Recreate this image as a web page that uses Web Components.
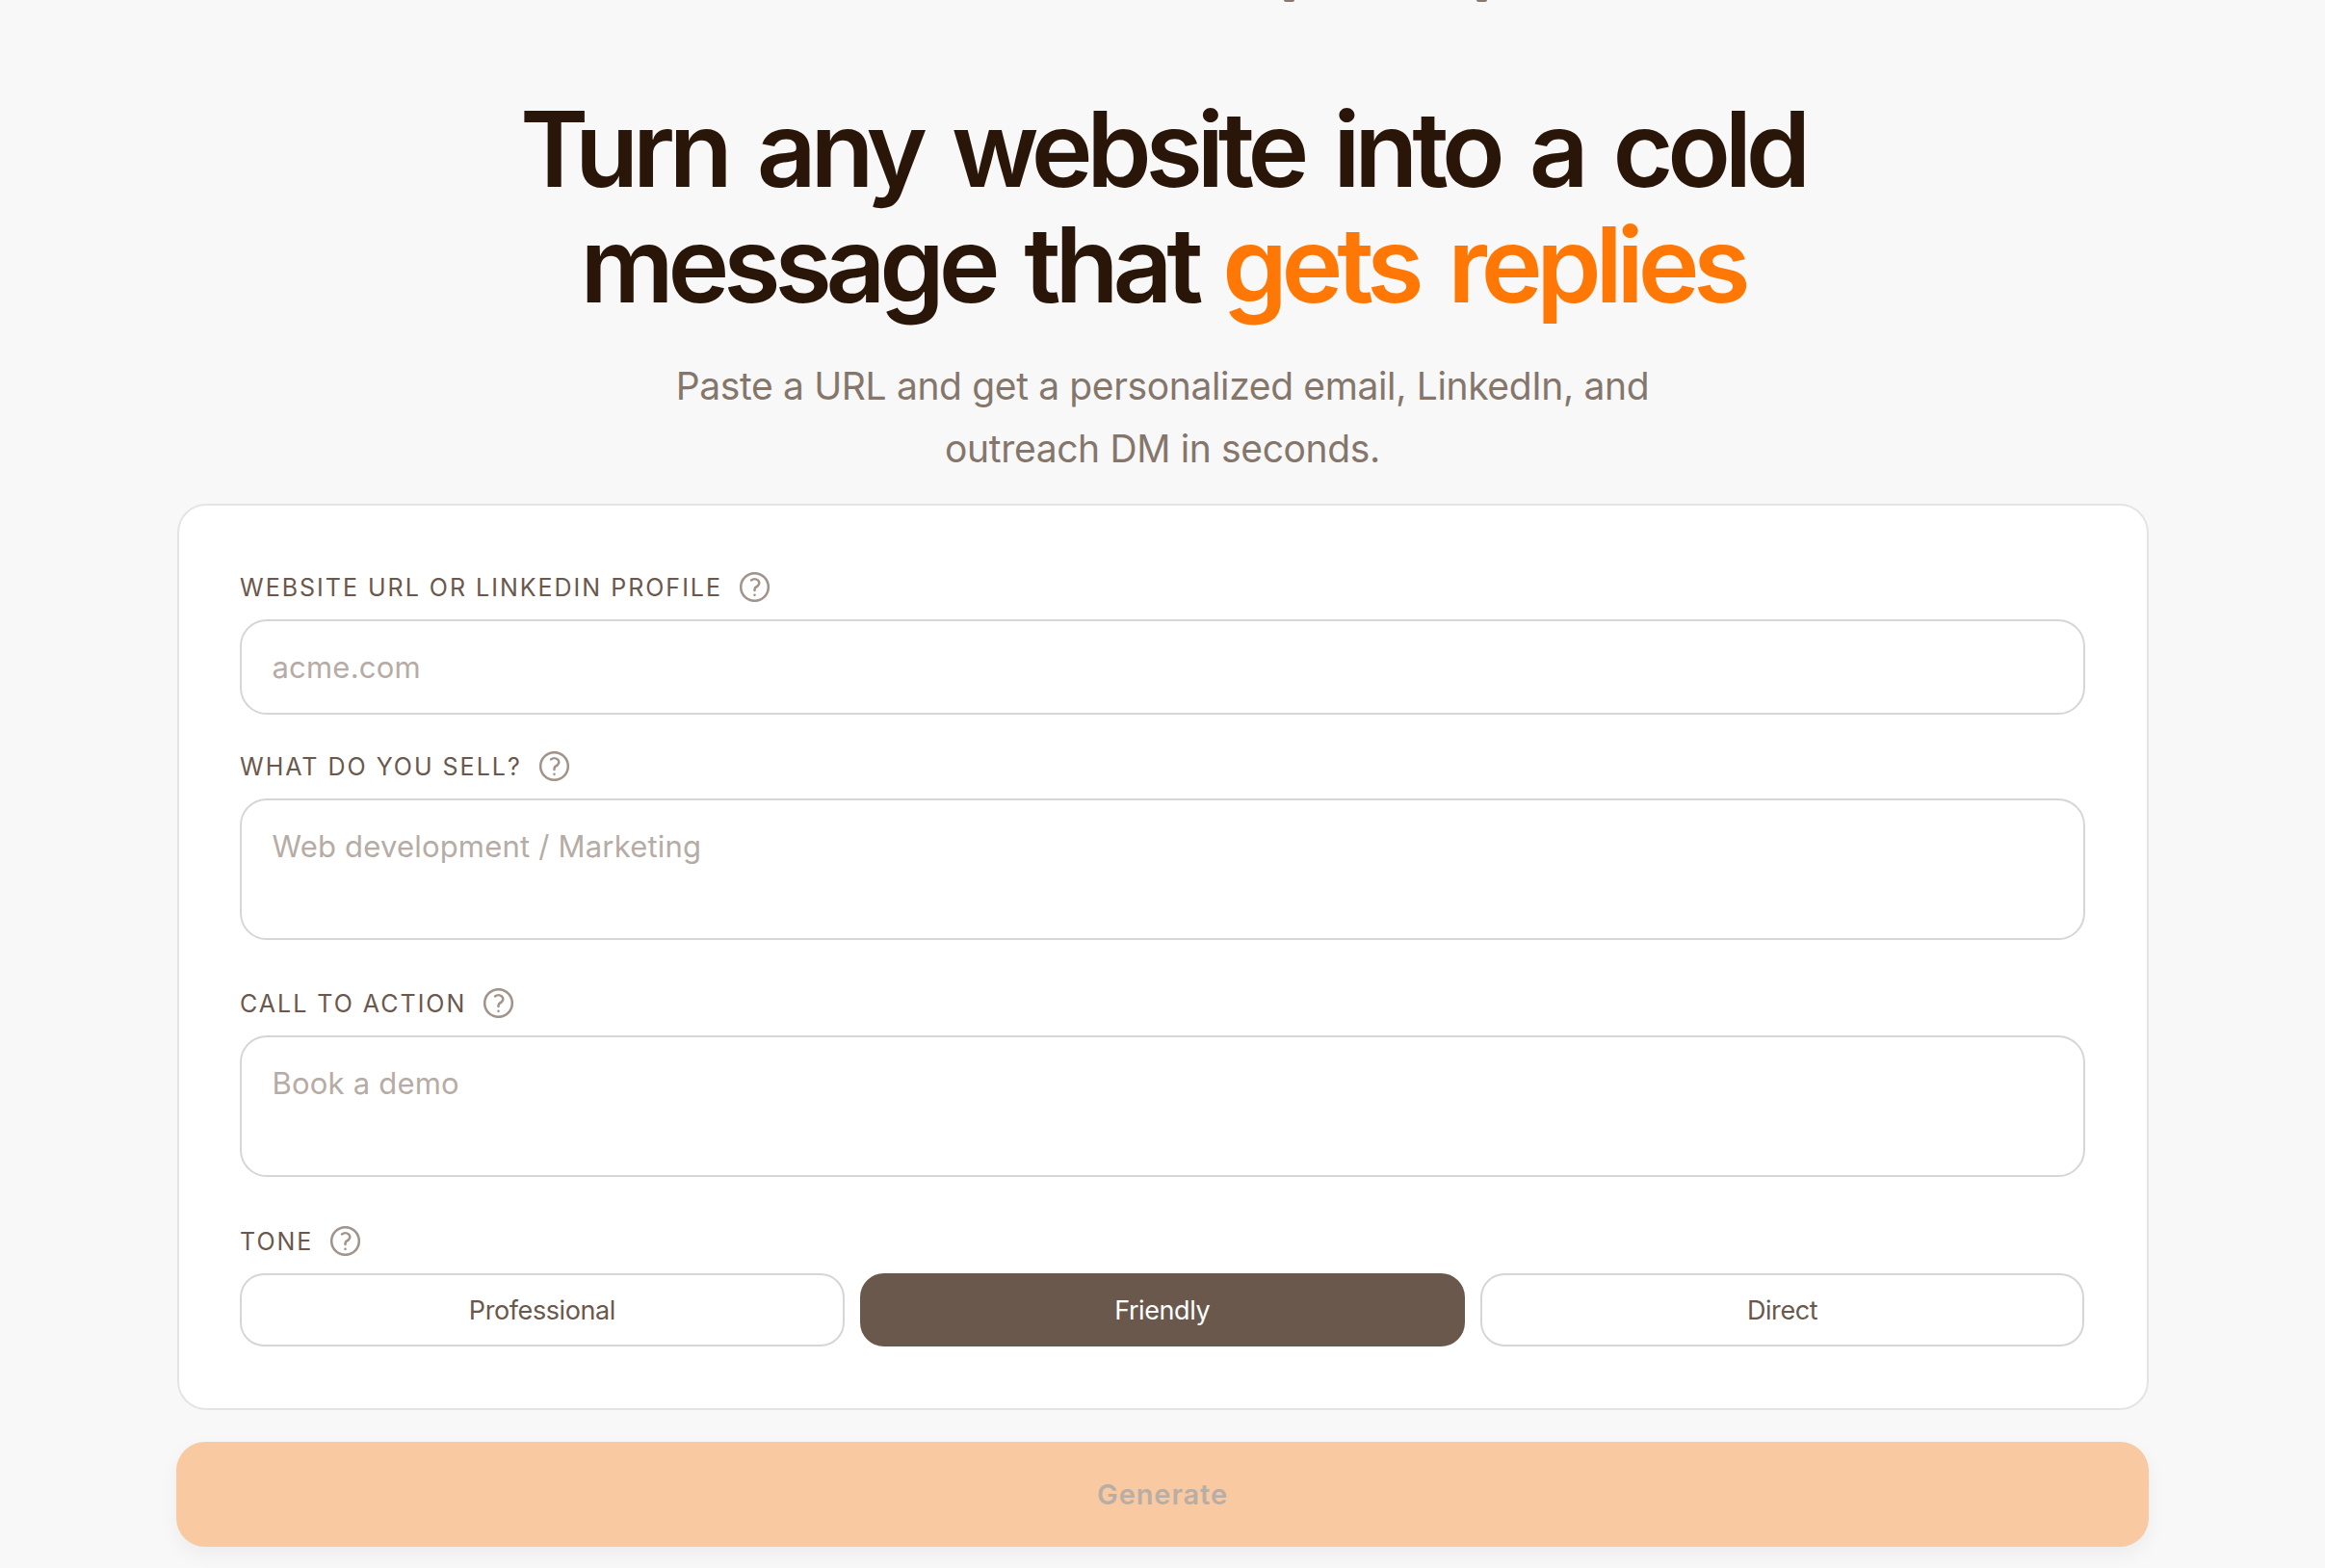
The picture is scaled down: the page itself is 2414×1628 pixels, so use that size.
<!DOCTYPE html>
<html lang="en">
<head>
<meta charset="utf-8">
<title>Cold message generator</title>
<style>
  html, body { margin: 0; height: 100%; overflow: hidden; }
  body { background: #f8f8f8; font-family: Inter, "Liberation Sans", sans-serif; }
</style>
</head>
<body>
<top-strip></top-strip>
<page-hero></page-hero>
<form-card>
  <form-field label="Website URL or LinkedIn profile" gap="38">
    <text-box placeholder="acme.com" height="99"></text-box>
  </form-field>
  <form-field label="What do you sell?" gap="50">
    <text-box placeholder="Web development / Marketing" height="147"></text-box>
  </form-field>
  <form-field label="Call to action" gap="51">
    <text-box placeholder="Book a demo" height="147"></text-box>
  </form-field>
  <form-field label="Tone" gap="0">
    <tone-picker>
      <tone-option>Professional</tone-option>
      <tone-option selected>Friendly</tone-option>
      <tone-option>Direct</tone-option>
    </tone-picker>
  </form-field>
</form-card>
<generate-button>Generate</generate-button>

<script>
// the nav above is scrolled out of the shot, only two descenders are left
class TopStrip extends HTMLElement {
  connectedCallback() {
    this.attachShadow({ mode: 'open' });
    this.shadowRoot.innerHTML = `
      <style>
        :host { display: flex; height: 2px; padding-left: 1333px; gap: 189px; overflow: hidden; }
        i { width: 11px; height: 2px; background: #6b584c; border-radius: 0 0 6px 6px; opacity: .8; }
      </style>
      <i></i><i></i>`;
  }
}
customElements.define('top-strip', TopStrip);

class PageHero extends HTMLElement {
  connectedCallback() {
    this.attachShadow({ mode: 'open' });
    this.shadowRoot.innerHTML = `
      <style>
        :host { display: block; text-align: center; padding-top: 92.5px; }
        h1 {
          margin: 0; font-size: 108px; line-height: 120px; font-weight: 600;
          letter-spacing: -6.2px; word-spacing: 10px; color: #2a1609;
        }
        em { font-style: normal; color: #ff7806; margin-left: -5px; }
        p {
          margin: 33.5px 0 25px; font-size: 39px; line-height: 65px;
          letter-spacing: -0.36px; color: #85766c;
        }
      </style>
      <h1>Turn any website into a cold<br>message that <em>gets replies</em></h1>
      <p>Paste a URL and get a personalized email, LinkedIn, and<br>outreach DM in seconds.</p>`;
  }
}
customElements.define('page-hero', PageHero);

class FormCard extends HTMLElement {
  connectedCallback() {
    this.attachShadow({ mode: 'open' });
    this.shadowRoot.innerHTML = `
      <style>
        :host {
          display: block; box-sizing: border-box; width: 2047px; margin-left: 183.5px;
          padding: 69px 64px 64px 63.5px; background: #fff;
          border: 2px solid #e4e4e4; border-radius: 30px;
        }
      </style>
      <slot></slot>`;
  }
}
customElements.define('form-card', FormCard);

class FormField extends HTMLElement {
  connectedCallback() {
    const label = this.getAttribute('label') || '';
    this.attachShadow({ mode: 'open' });
    this.shadowRoot.innerHTML = `
      <style>
        :host { display: block; margin-bottom: ${this.getAttribute('gap') || 0}px; }
        .label {
          display: flex; align-items: center; gap: 18px; height: 31px; margin-bottom: 18px;
          font-size: 25px; letter-spacing: 2px; text-transform: uppercase; color: #6b584c;
        }
        svg { width: 31px; height: 31px; fill: none; stroke: #a0948c; stroke-width: 1.6; stroke-linecap: round; stroke-linejoin: round; }
      </style>
      <div class="label">
        <span>${label}</span>
        <svg viewBox="2.25 2.25 19.5 19.5"><path d="M9.879 7.519c1.171-1.025 3.071-1.025 4.242 0 1.172 1.025 1.172 2.687 0 3.712-.203.179-.43.326-.67.442-.745.361-1.45.999-1.45 1.827v.75M21 12a9 9 0 1 1-18 0 9 9 0 0 1 18 0Zm-9 5.25h.008v.008H12v-.008Z"/></svg>
      </div>
      <slot></slot>`;
  }
}
customElements.define('form-field', FormField);

class TextBox extends HTMLElement {
  connectedCallback() {
    this.attachShadow({ mode: 'open' });
    this.shadowRoot.innerHTML = `
      <style>
        :host {
          display: block; box-sizing: border-box; height: ${this.getAttribute('height')}px;
          padding: 0 31.5px; border: 2px solid #d6d6d6; border-radius: 28px; background: #fff;
          font-size: 31px; line-height: 95px; letter-spacing: 0.2px; color: #b6aca5;
        }
      </style>
      ${this.getAttribute('placeholder') || ''}`;
  }
}
customElements.define('text-box', TextBox);

class TonePicker extends HTMLElement {
  connectedCallback() {
    this.attachShadow({ mode: 'open' });
    this.shadowRoot.innerHTML = `
      <style>:host { display: grid; grid-template-columns: repeat(3, 1fr); gap: 16px; }</style>
      <slot></slot>`;
  }
}
customElements.define('tone-picker', TonePicker);

class ToneOption extends HTMLElement {
  connectedCallback() {
    const on = this.hasAttribute('selected');
    this.attachShadow({ mode: 'open' });
    this.shadowRoot.innerHTML = `
      <style>
        :host {
          display: flex; align-items: center; justify-content: center; box-sizing: border-box;
          height: 76px; border-radius: 25px; font-size: 27px; letter-spacing: -0.4px;
          border: 2px solid ${on ? '#6b584c' : '#d6d6d6'};
          background: ${on ? '#6b584c' : '#fff'};
          color: ${on ? '#fff' : '#6b584c'};
        }
      </style>
      <slot></slot>`;
  }
}
customElements.define('tone-option', ToneOption);

class GenerateButton extends HTMLElement {
  connectedCallback() {
    this.attachShadow({ mode: 'open' });
    this.shadowRoot.innerHTML = `
      <style>
        :host {
          display: flex; align-items: center; justify-content: center; box-sizing: border-box;
          width: 2048px; height: 109px; margin: 33px 0 0 183px; border-radius: 30px;
          background: #f9c9a2; box-shadow: 0 8px 20px rgba(0, 0, 0, .05);
          font-size: 29px; font-weight: 600; letter-spacing: .9px; color: #b9aea5;
        }
      </style>
      <slot></slot>`;
  }
}
customElements.define('generate-button', GenerateButton);
</script>
</body>
</html>
